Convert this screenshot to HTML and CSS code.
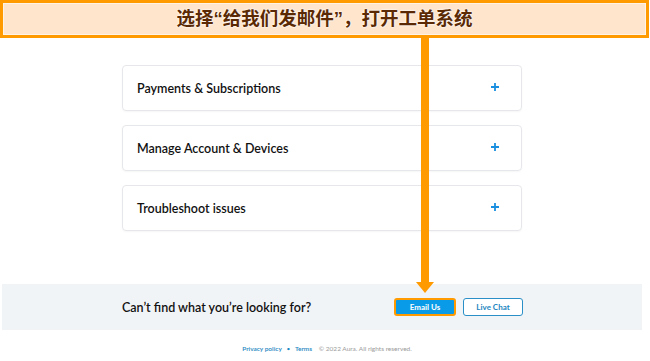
FILE: index.html
```html
<!DOCTYPE html>
<html lang="zh">
<head>
  <meta charset="UTF-8">
  <title>Aura Support</title>
  <link rel="stylesheet" href="styles.css">
</head>
<body>

  <div class="callout">选择“给我们发邮件”，打开工单系统</div>
  <svg class="callout-arrow" width="20" height="256" viewBox="0 0 20 256">
    <rect x="6" y="0" width="8" height="246" fill="#ff9a00"/>
    <polygon points="1,244 19,244 10,255" fill="#ff9a00"/>
  </svg>

  <main class="topics">
    <div class="topic">
      <span>Payments &amp; Subscriptions</span>
      <svg class="plus" width="8" height="8" viewBox="0 0 8 8"><path d="M4 0v8M0 4h8" stroke="#1a8fe0" stroke-width="1.8"/></svg>
    </div>
    <div class="topic">
      <span>Manage Account &amp; Devices</span>
      <svg class="plus" width="8" height="8" viewBox="0 0 8 8"><path d="M4 0v8M0 4h8" stroke="#1a8fe0" stroke-width="1.8"/></svg>
    </div>
    <div class="topic">
      <span>Troubleshoot issues</span>
      <svg class="plus" width="8" height="8" viewBox="0 0 8 8"><path d="M4 0v8M0 4h8" stroke="#1a8fe0" stroke-width="1.8"/></svg>
    </div>
  </main>

  <section class="help-bar">
    <div class="help-inner">
      <p>Can’t find what you’re looking for?</p>
      <div class="help-actions">
        <button class="btn btn-email">Email Us</button>
        <button class="btn btn-chat">Live Chat</button>
      </div>
    </div>
  </section>

  <footer class="footer">
    <a href="#">Privacy policy</a>
    <span class="dot">•</span>
    <a href="#">Terms</a>
    <span class="copy">© 2022 Aura. All rights reserved.</span>
  </footer>

</body>
</html>
```

FILE: styles.css
```css
body {
  margin: 0;
  font-family: Lato, 'Noto Sans', sans-serif;
  color: #1b1b1b;
  background: #fff;
}

/* 注釈バナー */
.callout {
  position: absolute;
  top: 0;
  left: 0;
  width: 643px;
  height: 32px;
  border: 3px solid #ff9a00;
  background: #fee5cc;
  box-shadow: inset 0 0 0 1px #fff3e6;
  font-family: 'Liberation Sans', 'Noto Sans CJK SC', sans-serif;
  font-weight: 700;
  font-size: 18.5px;
  line-height: 32px;
  text-align: center;
  color: #5b2a04;
  text-shadow: 0 0 2px #fff, 0 0 2px #fff;
}

.callout-arrow {
  position: absolute;
  left: 415px;
  top: 38px;
}

.topics {
  width: 400px;
  margin: 65px 0 0 122px;
  display: flex;
  flex-direction: column;
  gap: 14px;
}

.topic {
  height: 44px;
  border: 1px solid #e6e7ea;
  border-radius: 4px;
  box-shadow: 0 1px 2px rgba(0, 0, 0, 0.04);
  display: flex;
  align-items: center;
  justify-content: space-between;
  padding: 0 22px 0 14px;
  font-size: 12.5px;
  font-weight: 600;
  color: #111;
}

.plus {
  margin-top: -2px;
}

.help-bar {
  margin: 53px 8px 0 2px;
  height: 46px;
  background: #f1f4f7;
  display: flex;
  align-items: center;
}

.help-inner {
  width: 401px;
  margin-left: 120px;
  display: flex;
  align-items: center;
  justify-content: space-between;
}

.help-inner p {
  margin: 0;
  font-size: 12.5px;
  font-weight: 600;
  color: #111;
}

.help-actions {
  display: flex;
  gap: 7px;
}

.btn {
  font-family: Lato, sans-serif;
  font-size: 8px;
  font-weight: 700;
  border-radius: 3px;
  padding: 0;
  cursor: pointer;
}

.btn-email {
  width: 62px;
  height: 18px;
  background: #0a9be8;
  color: #fff;
  border: 2px solid #ff9a00;
}

.btn-chat {
  width: 60px;
  height: 18px;
  background: #fff;
  color: #1d86c1;
  border: 1px solid #2a8fc7;
}

.footer {
  text-align: center;
  margin-top: 15px;
  padding-left: 4px;
  font-size: 6.5px;
  color: #9a9a9a;
}

.footer a {
  color: #1d86c1;
  text-decoration: none;
  font-weight: 600;
}

.dot {
  margin: 0 3px;
  color: #1d86c1;
}

.copy {
  margin-left: 5px;
}
```
